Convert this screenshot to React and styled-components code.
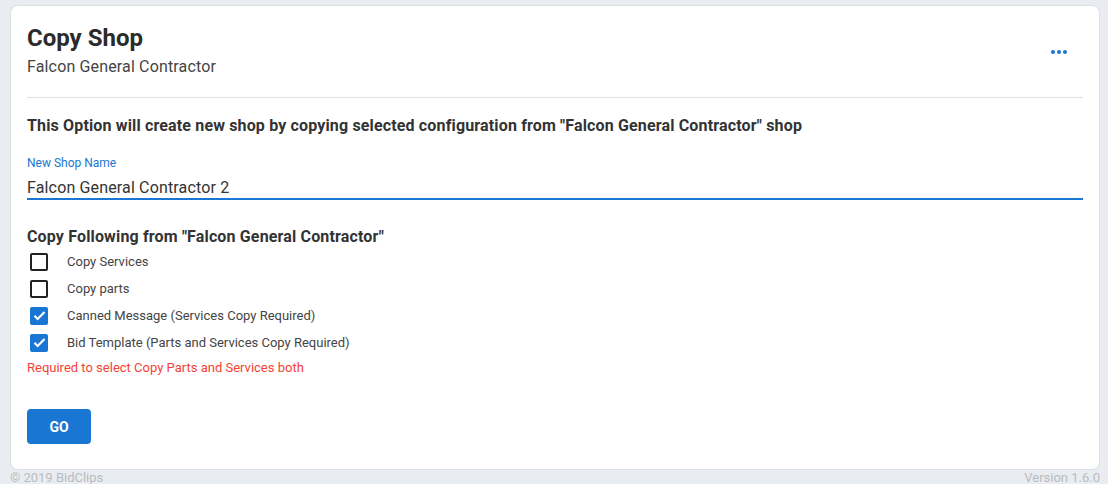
import React, { useState } from "react";
import styled, { createGlobalStyle } from "styled-components";

const GlobalStyle = createGlobalStyle`
  body {
    margin: 0;
    background: #e9ecf0;
    font-family: Roboto, "Liberation Sans", sans-serif;
    color: #333;
  }
`;

const Page = styled.div`
  padding: 5px 8px 0 10px;
`;

const Card = styled.div`
  background: #fff;
  border: 1px solid #dcdfe3;
  border-radius: 8px;
  padding: 17px 16px 25px 16px;
`;

const Header = styled.div`
  display: flex;
  align-items: center;
  justify-content: space-between;
  padding-bottom: 19px;
  border-bottom: 1px solid #e0e0e0;
`;

const Title = styled.h1`
  margin: 0;
  font-size: 24px;
  font-weight: 700;
  line-height: 30px;
  color: #2b2b2b;
`;

const Subtitle = styled.div`
  font-size: 16px;
  line-height: 22px;
  letter-spacing: 0.15px;
  color: #444;
  margin-top: 3px;
`;

const MoreButton = styled.button`
  background: none;
  border: none;
  width: 40px;
  height: 40px;
  margin-right: 4px;
  margin-top: 3px;
  display: flex;
  align-items: center;
  justify-content: center;
  color: #1976d2;
  cursor: pointer;
  padding: 0;
`;

const Notice = styled.div`
  font-size: 16px;
  font-weight: 700;
  letter-spacing: 0.15px;
  color: #333;
  margin-top: 18px;
  line-height: 20px;
`;

const Field = styled.div`
  margin-top: 19px;
`;

const FieldLabel = styled.label`
  display: block;
  font-size: 12px;
  color: #1976d2;
  line-height: 16px;
`;

const TextInput = styled.input`
  display: block;
  width: 100%;
  box-sizing: border-box;
  border: none;
  border-bottom: 2px solid #1976d2;
  outline: none;
  font-family: inherit;
  font-size: 16px;
  letter-spacing: 0.15px;
  color: #333;
  padding: 7px 0 1px;
  background: transparent;
`;

const SectionTitle = styled.div`
  font-size: 16px;
  font-weight: 700;
  letter-spacing: 0.15px;
  color: #333;
  margin-top: 27px;
  line-height: 20px;
`;

const CheckList = styled.div`
  display: flex;
  flex-direction: column;
  margin-top: 1px;
`;

const CheckRow = styled.label`
  display: flex;
  align-items: center;
  height: 27px;
  cursor: pointer;
`;

const Box = styled.span`
  width: 18px;
  height: 18px;
  box-sizing: border-box;
  margin-left: 3px;
  border-radius: 2px;
  display: flex;
  align-items: center;
  justify-content: center;
  border: ${(p) => (p.checked ? "none" : "2px solid #222")};
  background: ${(p) => (p.checked ? "#1976d2" : "transparent")};
`;

const CheckText = styled.span`
  font-size: 13px;
  color: #444;
  margin-left: 19px;
`;

const ErrorText = styled.div`
  font-size: 13px;
  color: #f44336;
  margin-top: 3px;
  line-height: 18px;
`;

const GoButton = styled.button`
  margin-top: 32px;
  width: 64px;
  height: 35px;
  border: none;
  border-radius: 4px;
  background: #1976d2;
  color: #fff;
  font-family: inherit;
  font-weight: 700;
  font-size: 14px;
  cursor: pointer;
`;

const Footer = styled.div`
  display: flex;
  justify-content: space-between;
  font-size: 13px;
  color: #b9bcc0;
  line-height: 13px;
  padding-top: 1px;
`;

const DotsIcon = () => (
  <svg width="16" height="4" viewBox="0 0 16 4" fill="currentColor">
    <circle cx="2" cy="2" r="2" />
    <circle cx="8" cy="2" r="2" />
    <circle cx="14" cy="2" r="2" />
  </svg>
);

const CheckIcon = () => (
  <svg width="15" height="15" viewBox="0 0 24 24" fill="none" stroke="#fff" strokeWidth="3.4">
    <path d="M4 12.5l5 5L20 6.5" />
  </svg>
);

const options = [
  { label: "Copy Services", checked: false },
  { label: "Copy parts", checked: false },
  { label: "Canned Message (Services Copy Required)", checked: true },
  { label: "Bid Template (Parts and Services Copy Required)", checked: true },
];

export default function App() {
  const [name, setName] = useState("Falcon General Contractor 2");
  const [items, setItems] = useState(options);

  const toggle = (i) =>
    setItems(items.map((it, idx) => (idx === i ? { ...it, checked: !it.checked } : it)));

  return (
    <Page>
      <GlobalStyle />
      <Card>
        <Header>
          <div>
            <Title>Copy Shop</Title>
            <Subtitle>Falcon General Contractor</Subtitle>
          </div>
          <MoreButton>
            <DotsIcon />
          </MoreButton>
        </Header>
        <Notice>
          This Option will create new shop by copying selected configuration from "Falcon General Contractor" shop
        </Notice>
        <Field>
          <FieldLabel>New Shop Name</FieldLabel>
          <TextInput value={name} onChange={(e) => setName(e.target.value)} />
        </Field>
        <SectionTitle>Copy Following from "Falcon General Contractor"</SectionTitle>
        <CheckList>
          {items.map((it, i) => (
            <CheckRow key={it.label} onClick={() => toggle(i)}>
              <Box checked={it.checked}>{it.checked && <CheckIcon />}</Box>
              <CheckText>{it.label}</CheckText>
            </CheckRow>
          ))}
        </CheckList>
        <ErrorText>Required to select Copy Parts and Services both</ErrorText>
        <GoButton>GO</GoButton>
      </Card>
      <Footer>
        <span>© 2019 BidClips</span>
        <span>Version 1.6.0</span>
      </Footer>
    </Page>
  );
}
